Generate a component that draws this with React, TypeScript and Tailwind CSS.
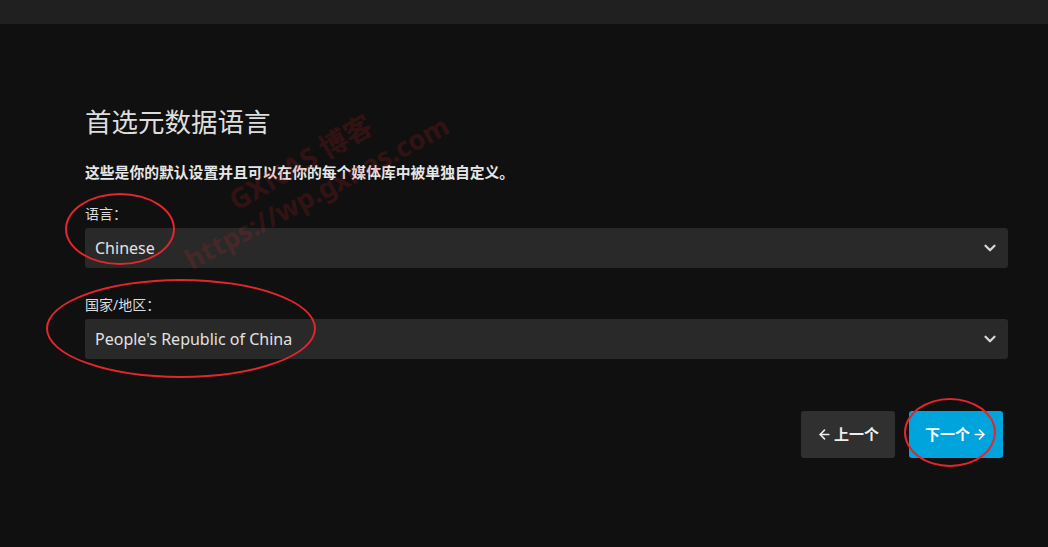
import { ArrowLeft, ArrowRight, ChevronDown } from "lucide-react"

const font = { fontFamily: '"Noto Sans", "Noto Sans CJK SC", sans-serif' }

const Select = ({ value }: { value: string }) => (
  <div className="flex h-10 items-center justify-between rounded-[3px] bg-[#292929] pl-[10px] pr-[9px]">
    <span className="text-[16px] text-[#e2e2e2]">{value}</span>
    <ChevronDown size={18} strokeWidth={3} className="text-[#d8d8d8]" />
  </div>
)

const Ring = ({ cls }: { cls: string }) => (
  <div className={`pointer-events-none absolute rounded-[50%] border-[2.5px] border-[#e3262c] ${cls}`} />
)

export default function App() {
  return (
    <div style={font} className="relative h-[547px] w-[1048px] overflow-hidden bg-[#101010]">
      <div className="h-6 bg-[#202020]" />

      <div className="px-[85px] pt-[82px] pr-[40px]">
        <h1 className="text-[26.5px] font-normal leading-8 text-[#dedede]">首选元数据语言</h1>
        <p className="mt-[23px] text-[14.8px] font-bold text-[#e6e6e6]">这些是你的默认设置并且可以在你的每个媒体库中被单独自定义。</p>

        <div className="mt-[20px] text-[14px] text-[#dcdcdc]">语言：</div>
        <div className="mt-[4px]">
          <Select value="Chinese" />
        </div>

        <div className="mt-[26px] text-[14px] text-[#dcdcdc]">国家/地区：</div>
        <div className="mt-[4px]">
          <Select value="People's Republic of China" />
        </div>

        <div className="mt-[52px] flex justify-end gap-[14px] pr-[5px]">
          <button className="flex h-[47px] w-[94px] items-center justify-center gap-[2px] rounded-[3px] bg-[#303030] text-[15px] font-bold text-[#eeeeee]">
            <ArrowLeft size={15} strokeWidth={2.5} />
            上一个
          </button>
          <button className="flex h-[47px] w-[94px] items-center justify-center gap-[2px] rounded-[3px] bg-[#00a4dc] text-[15px] font-bold text-white">
            下一个
            <ArrowRight size={15} strokeWidth={2.5} />
          </button>
        </div>
      </div>

      {/* watermark */}
      <div className="pointer-events-none absolute left-[238px] top-[186px] origin-bottom-left -rotate-[30deg] whitespace-nowrap text-[28px] font-bold leading-none text-[#e3262c] opacity-[0.16]">
        GXNAS 博客
      </div>
      <div className="pointer-events-none absolute left-[193px] top-[246px] origin-bottom-left -rotate-[28deg] whitespace-nowrap text-[27px] font-bold leading-none text-[#e3262c] opacity-[0.16]">
        https://wp.gxnas.com
      </div>

      {/* annotation rings */}
      <Ring cls="left-[65px] top-[193px] h-[72px] w-[110px]" />
      <Ring cls="left-[46px] top-[279px] h-[99px] w-[270px]" />
      <Ring cls="left-[904px] top-[398px] h-[69px] w-[92px]" />
    </div>
  )
}
